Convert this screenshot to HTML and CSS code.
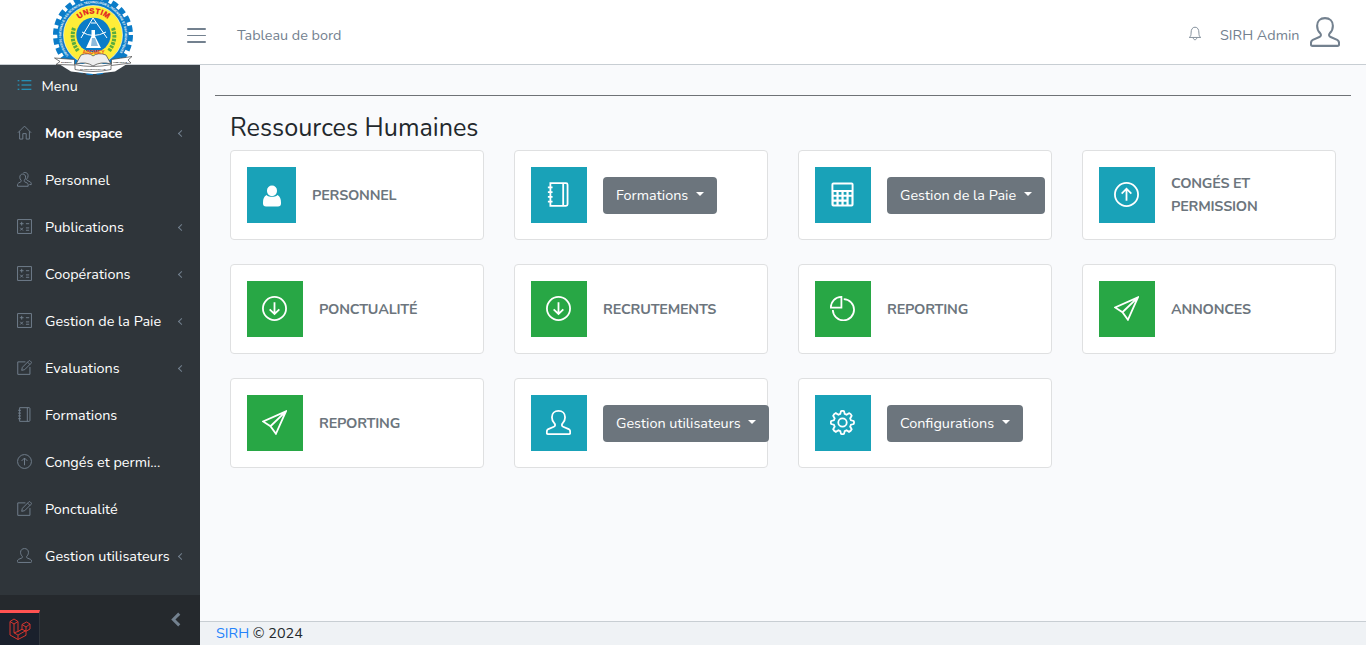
FILE: index.html
```html
<!DOCTYPE html>
<html lang="fr">
<head>
<meta charset="utf-8">
<title>SIRH - Tableau de bord</title>
<link rel="stylesheet" href="styles.css">
</head>
<body>
<svg class="sprite" aria-hidden="true">
  <symbol id="home" viewBox="0 0 16 16"><path d="M1 8.2 8 1.2l7 7M2.8 6.8V15h3.4V9.2h3.6V15h3.4V6.8"/></symbol>
  <symbol id="user" viewBox="0 0 16 16"><path d="M5.400 8.600C4.200 7.500 3.800 6 3.800 4.600 3.800 2.200 5.500.6 8 .6s4.200 1.600 4.200 4c0 1.400-.4 2.900-1.600 4-.7.800-.5 1.700.4 2.100l3.500 1.500c.8.4 1 1 1 1.800v.6q0 .8-.8.8H1.300q-.8 0-.8-.8V14c0-.8.2-1.400 1-1.800L5 10.700c.9-.4 1.100-1.300.4-2.100z"/></symbol>
  <symbol id="people" viewBox="0 0 16 16"><path d="M4.300 8.800C3.400 7.900 3 6.700 3 5.500c0-2 1.300-3.300 3.100-3.300s3.100 1.300 3.100 3.300c0 1.200-.4 2.400-1.300 3.300-.6.8-.2 1.400.4 1.700l2.600 1.300c.7.4 1 1 1 1.700v1.700H.6v-1.700c0-.7.3-1.300 1-1.700l2.300-1.300c.6-.3 1-.9.4-1.700zM6.800.9C7.300.6 8 .5 8.700.6c1.800 0 3.100 1.300 3.100 3.300 0 1.300-.4 2.500-1.300 3.400-.5.8-.2 1.300.4 1.600l2.900 1.500c1 .6 1.400 1.200 1.400 2v1h-2"/></symbol>
  <symbol id="calc" viewBox="0 0 16 16"><path d="M.6.6h14.800v14.800H.6zM3 5h4M5 3v4M9.500 5h3.500M3.400 9.300l3 3M6.400 9.300l-3 3M9.500 9.500H13M9.500 12H13"/></symbol>
  <symbol id="edit" viewBox="0 0 16 16"><path d="M9 2H.8v13.300h13V7.500M5 11l.7-3.200L12.600.9q.7-.6 1.400 0l1.100 1.100q.6.7 0 1.400L8.200 10.300zM11.300 2.300l2.500 2.500"/></symbol>
  <symbol id="book" viewBox="0 0 16 16"><path d="M2.800.7h10q1 0 1 1v12.600q0 1-1 1h-10zM11 .7v14.600M1.200 3.500h3M1.200 6.500h3M1.200 9.500h3M1.200 12.500h3"/></symbol>
  <symbol id="up" viewBox="0 0 16 16"><circle cx="8" cy="8" r="7.400"/><path d="M8 12V4.300M4.900 7.400 8 4.300l3.100 3.100"/></symbol>
  <symbol id="down" viewBox="0 0 16 16"><circle cx="8" cy="8" r="7.400"/><path d="M8 4v7.400M4.900 8.500 8 11.500l3.100-3"/></symbol>
  <symbol id="bell" viewBox="0 0 16 16"><path d="M1.500 12.500c1.500-1 2-2.500 2-5C3.500 3.300 5 .8 8 .8s4.500 2.500 4.500 6.700c0 2.500.5 4 2 5zM6 13c.2 2.800 3.800 2.800 4 0"/></symbol>
  <symbol id="list" viewBox="0 0 16 14"><path d="M4.500 2H16M4.500 7H16M4.500 12H16M0 2h2M0 7h2M0 12h2"/></symbol>
  <symbol id="person" viewBox="0 0 18 22"><path fill="currentColor" stroke="none" d="M9 .5a5 5 0 0 1 5 5c0 4-2.500 5.500-5 5.500S4 9.500 4 5.500a5 5 0 0 1 5-5zM3.500 10C5 11.500 7 11.800 9 11.800s4-.3 5.500-1.800C17 11.500 18 14 18 17.500v1Q18 21.500 15 21.500H3Q0 21.500 0 18.500v-1C0 14 1 11.500 3.500 10z"/></symbol>
  <symbol id="calculator" viewBox="0 0 24 26"><path stroke="none" fill="currentColor" fill-rule="evenodd" d="M2.500.5h19q2 0 2 2v21q0 2-2 2h-19q-2 0-2-2v-21q0-2 2-2zM2.500 2.500v5.800h19V2.500zM2.800 10.300v2.900h2.900v-2.900zm5.200 0v2.900h2.900v-2.900zm5.200 0v2.900h2.900v-2.900zm5.200 0v2.900h2.900v-2.900zM2.800 15.400v2.900h2.900v-2.900zm5.200 0v2.900h2.900v-2.900zm5.200 0v2.900h2.900v-2.900zM2.800 20.500v2.900h2.900v-2.900zm5.200 0v2.900h2.900v-2.900zm5.200 0v2.900h2.900v-2.900zm5.200-5.100v8h2.900v-8z"/></symbol>
  <symbol id="plane" viewBox="0 0 16 16"><path d="M15.300.9.700 7.300l4.700 3.100L8.900 15.200zM5.400 10.400 15.300.9"/></symbol>
  <symbol id="pie" viewBox="0 0 16 16"><path d="M7.300.6v6.900H.5C.5 3.500 3.300.7 7.300.6zM8.800 2a6.800 6.800 0 1 1-7 7"/></symbol>
  <symbol id="gear" viewBox="0 0 16 16"><circle cx="8" cy="8" r="2.700"/><path d="M6.600 2.500 7 .8Q8 .2 9 .8l.4 1.700 1.200.5 1.600-1q1.200.4 1.700 1.700l-1 1.700.5 1.200 1.700.4q.6 1 0 2l-1.700.4-.5 1.200 1 1.700q-.5 1.200-1.700 1.700l-1.600-1-1.200.5-.4 1.700q-1 .6-2 0l-.4-1.700-1.200-.5-1.700 1Q2.500 13.500 2 12.300l1-1.700-.5-1.200L.8 9Q.2 8 .8 7l1.700-.4L3 5.400l-1-1.700Q2.500 2.500 3.700 2l1.700 1z"/></symbol>
</svg>

<header class="topbar">
  <div class="brand">
    <svg class="logo" viewBox="0 0 80 80">
      <defs>
        <path id="arc-ring" d="M15.600 60.400A31.800 31.800 0 1 1 64.400 60.400"/>
        <path id="arc-top" d="M19 40a21.500 21.500 0 0 1 43 0"/>
      </defs>
      <circle cx="40" cy="40" r="39" fill="#fff"/>
      <circle cx="40" cy="40" r="37.200" fill="none" stroke="#0b7cc8" stroke-width="5.600" stroke-dasharray="6.200 3.540"/>
      <circle cx="40" cy="40" r="35.800" fill="#0b7cc8"/>
      <circle cx="40" cy="40" r="29.500" fill="#ffed38" stroke="#fff" stroke-width=".6"/>
      <circle cx="40.500" cy="40" r="17.200" fill="#0b7cc8"/>
      <g fill="none" stroke="#59ac3e" stroke-width="4" stroke-dasharray="2.600 1"><path d="M21 33q-4 12 4 23M60 33q4 12-4 23"/></g>
      <path d="m28 43 12-20 14 20M29 37q11 7 24 0M38 28h5" fill="none" stroke="#fff" stroke-width="1"/>
      <path d="M38.500 35h3.500v6l6 12H33l5.500-12z" fill="#fff"/>
      <path d="M39 43h3l3 8h-7z" fill="#8cb9db"/>
      <text class="logo-ring" textLength="140" lengthAdjust="spacingAndGlyphs"><textPath href="#arc-ring">UNIVERSITE NATIONALE DES SCIENCES, TECHNOLOGIES, INGENIERIE ET MATHEMATIQUES</textPath></text>
      <text class="logo-name"><textPath href="#arc-top" startOffset="50%">UNSTIM</textPath></text>
      <path d="M6 69h68L62 76.500 40 79 18 76.500z" fill="#fff"/>
      <path d="M28 60q8-3 12 1 5-4 13-1l5 9q-10-3-18 2-7-5-17-2z" fill="#eee" stroke="#555" stroke-width=".8"/>
      <path d="m1.500 63 20 1.500v5q18 4 37 0v-5L79 61.500l-4 3.500 3 3-20 2.500v4q-18 4-36 0V70L3 69.500l4-3z" fill="#fff" stroke="#444" stroke-width=".7"/>
      <text class="logo-city" x="40.500" y="58.500">ABOMEY</text>
      <text class="logo-motto" x="13.500" y="67.800">SCIENTIA</text>
      <text class="logo-motto" x="40" y="74.800">ET TECHNOLOGIA AD</text>
      <text class="logo-motto" x="67" y="67.500">HUMANITAS</text>
    </svg>
  </div>
  <span class="burger"><i></i><i></i><i></i></span>
  <span class="crumb">Tableau de bord</span>
  <div class="account">
    <svg class="bell"><use href="#bell"/></svg>
    <span class="admin">SIRH Admin</span>
    <svg class="avatar"><use href="#user"/></svg>
  </div>
</header>

<div class="shell">
  <aside class="sidebar">
    <div class="menu-title"><svg><use href="#list"/></svg><span>Menu</span></div>
    <nav>
      <a class="item"><svg><use href="#home"/></svg><b>Mon espace</b><i class="chev"></i></a>
      <a class="item"><svg><use href="#people"/></svg><span>Personnel</span></a>
      <a class="item"><svg><use href="#calc"/></svg><span>Publications</span><i class="chev"></i></a>
      <a class="item"><svg><use href="#calc"/></svg><span>Coopérations</span><i class="chev"></i></a>
      <a class="item"><svg><use href="#calc"/></svg><span>Gestion de la Paie</span><i class="chev"></i></a>
      <a class="item"><svg><use href="#edit"/></svg><span>Evaluations</span><i class="chev"></i></a>
      <a class="item"><svg><use href="#book"/></svg><span>Formations</span></a>
      <a class="item"><svg><use href="#up"/></svg><span>Congés et permi...</span></a>
      <a class="item"><svg><use href="#edit"/></svg><span>Ponctualité</span></a>
      <a class="item"><svg><use href="#user"/></svg><span>Gestion utilisateurs</span><i class="chev"></i></a>
    </nav>
    <div class="minimizer">
      <div class="debug"><svg viewBox="0 0 22 22"><path d="M1 3.500 5 1l4 2.500v10l4-2.300V6.500L17.500 4 21 6v5l-4 2.300v4L9 21.500 1 17zM1 3.500 5 6l4-2.500M5 6v8.800l4 2.300 8-4.600M5 14.800l4-1.300M9 17.100v4.400M13 6.500l4 2.500 4-3M17 9v4.300l-4-2.100"/></svg></div>
      <svg class="collapse" viewBox="0 0 10 14"><path d="M8.500 1.500 3 7l5.500 5.500"/></svg>
    </div>
  </aside>

  <div class="page">
    <main>
      <hr>
      <section>
        <h1>Ressources Humaines</h1>
        <div class="cards">
          <div class="card"><span class="tile narrow"><svg class="solid"><use href="#person"/></svg></span><strong>PERSONNEL</strong></div>
          <div class="card"><span class="tile"><svg><use href="#book"/></svg></span><button class="w1"><span>Formations</span></button></div>
          <div class="card"><span class="tile"><svg><use href="#calculator"/></svg></span><button class="w2"><span>Gestion de la Paie</span></button></div>
          <div class="card"><span class="tile"><svg><use href="#up"/></svg></span><strong>CONGÉS ET<br>PERMISSION</strong></div>
          <div class="card"><span class="tile green"><svg><use href="#down"/></svg></span><strong>PONCTUALITÉ</strong></div>
          <div class="card"><span class="tile green"><svg><use href="#down"/></svg></span><strong>RECRUTEMENTS</strong></div>
          <div class="card"><span class="tile green"><svg><use href="#pie"/></svg></span><strong>REPORTING</strong></div>
          <div class="card"><span class="tile green"><svg><use href="#plane"/></svg></span><strong>ANNONCES</strong></div>
          <div class="card"><span class="tile green"><svg><use href="#plane"/></svg></span><strong>REPORTING</strong></div>
          <div class="card"><span class="tile"><svg><use href="#user"/></svg></span><button class="w3"><span>Gestion utilisateurs</span></button></div>
          <div class="card"><span class="tile"><svg><use href="#gear"/></svg></span><button class="w4"><span>Configurations</span></button></div>
        </div>
      </section>
    </main>
    <footer><a>SIRH</a> © 2024</footer>
  </div>
</div>
</body>
</html>
```
FILE: styles.css
```css
* { box-sizing: border-box; }
body {
  margin: 0;
  height: 645px;
  display: flex;
  flex-direction: column;
  overflow: hidden;
  background: #f9fafc;
  color: #23282c;
  font: 14.4px/23px Nunito, Lato, sans-serif;
}
svg { fill: none; stroke: currentColor; stroke-width: 1; flex: none; }
.sprite { position: absolute; width: 0; height: 0; }

.topbar {
  height: 65px;
  flex: none;
  display: flex;
  align-items: center;
  background: #fff;
  border-bottom: 1px solid #c8ced3;
  color: #73818f;
}
.brand { width: 187px; height: 64px; padding-left: 53px; }
.logo { display: block; position: relative; z-index: 2; width: 80px; height: 80px; margin-top: -5.500px; stroke: none; }
.logo text { font-family: "Liberation Sans", sans-serif; font-weight: bold; text-anchor: middle; }
.logo .logo-ring { font-size: 3.200px; fill: #fff; text-anchor: start; }
.logo .logo-name { font-size: 7.600px; fill: #e21c23; stroke: #e21c23; stroke-width: .3; letter-spacing: .4px; }
.logo .logo-city { font-size: 5px; fill: #ed4b23; }
.logo .logo-motto { font-size: 2.400px; fill: #222; }
.burger { width: 19px; margin-top: 7px; display: flex; flex-direction: column; gap: 5px; }
.burger i { height: 1.600px; background: #73818f; border-radius: 1px; }
.crumb { margin: 6px 0 0 31px; }
.account { margin-left: auto; padding-right: 26px; display: flex; align-items: center; }
.bell { width: 14px; height: 15px; margin: 3px 18px 0 0; }
.admin { margin: 6px 10px 0 0; width: 80px; white-space: nowrap; }
.avatar { width: 30px; height: 30px; stroke-width: 1.100; }

.shell { flex: 1; display: flex; min-height: 0; }
.sidebar { width: 200px; flex: none; display: flex; flex-direction: column; background: #2f353a; color: #fff; }
.menu-title { height: 45px; display: flex; align-items: flex-start; padding: 10px 17px; gap: 9.500px; background: #3a4248; }
.menu-title svg { width: 15px; height: 12px; margin-top: 4px; color: #20a8d8; stroke-width: 1.300; }
nav { height: 485px; }
.item { height: 47px; display: flex; align-items: center; padding: 0 17px; white-space: nowrap; }
.item svg { width: 15px; height: 15px; margin: -3px 13px 0 0; color: #73818f; }
.item b { letter-spacing: -.18px; }
.chev { width: 5px; height: 5px; margin: 0 -1px 0 auto; border: solid #73818f; border-width: 0 0 1.500px 1.500px; transform: rotate(45deg); flex: none; }
.minimizer { height: 50px; display: flex; justify-content: space-between; align-items: flex-end; background: #25292d; }
.debug { width: 40px; height: 35px; border-top: 3px solid #ff5252; border-right: 1px solid #31363c; background: #1a202c; display: flex; justify-content: center; align-items: center; color: #d5352e; }
.debug svg { width: 22px; height: 22px; }
.collapse { width: 11px; height: 15px; margin: 0 19px 18px 0; color: #73818f; stroke-width: 2.800; }

.page { flex: 1; display: flex; flex-direction: column; }
main { flex: 1; padding: 30px 15px 0; }
hr { margin: 0; border: 0; border-top: 1px solid #6f7276; }
section { padding: 17px 15px 0; }
h1 { margin: 0 0 7px; font-size: 25.200px; line-height: 30px; font-weight: 400; }
.cards { display: grid; grid-template-columns: repeat(4, 254px); gap: 24px 30px; }
.card { height: 90px; display: flex; align-items: center; gap: 16px; padding: 16px; background: #fff; border: 1px solid #dfe0e1; border-radius: 4px; }
.tile { width: 56px; height: 56px; flex: none; display: flex; align-items: center; justify-content: center; background: #19a2b8; color: #fff; }
.tile.narrow { width: 49px; }
.tile.green { background: #28a745; }
.tile svg { width: 25px; height: 25px; margin: 0 1px 1px 0; stroke-width: 1.150; }
.tile svg.solid { width: 18px; height: 22px; margin: 1px 0 0; }
strong { color: #6c757d; font-weight: 700; letter-spacing: -.22px; }
button { height: 37px; flex: none; display: flex; align-items: center; justify-content: space-between; padding: 0 13px; border: 0; border-radius: 4px; background: #6c757d; color: #fff; font: inherit; white-space: nowrap; }
button::after { content: ""; margin-top: -2px; border: 4.300px solid transparent; border-top-color: #fff; border-bottom: 0; }
.w1 { width: 114px; }
.w2 { width: 158px; }
.w3 { width: 166px; }
.w4 { width: 136px; }
footer { height: 24px; padding: 0 16px; background: #eff2f5; border-top: 1px solid #c8ced3; font-weight: 400; }
footer a { color: #2583fb; }
```
